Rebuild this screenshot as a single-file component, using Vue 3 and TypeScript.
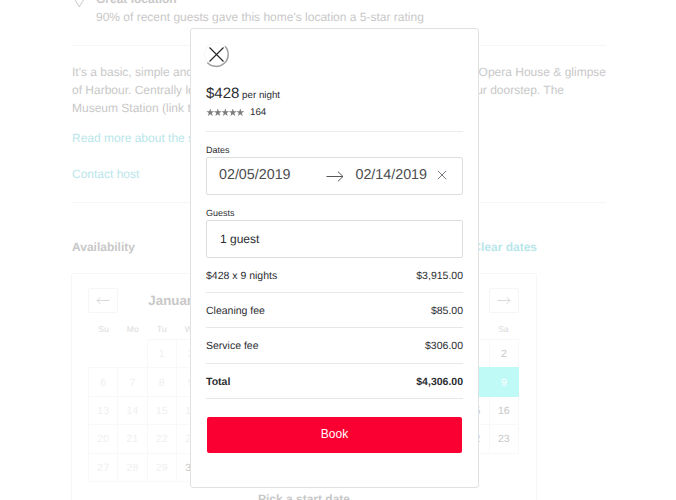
<script setup lang="ts">
interface SummaryLine { start: string; end: string; width: number }
interface Day { label: string; state: string }

const summary: SummaryLine[] = [
  { start: "It's a basic, simple and", end: 'Opera House & glimpse', width: 534 },
  { start: 'of Harbour. Centrally located', end: 'your doorstep. The', width: 492 },
  { start: 'Museum Station (link train)', end: '', width: 534 },
]

const weekdays = ['Su', 'Mo', 'Tu', 'We', 'Th', 'Fr', 'Sa']

function buildDays(offset: number, count: number, stateOf: (d: number) => string): Day[] {
  const total = Math.ceil((offset + count) / 7) * 7
  return Array.from({ length: total }, (_, i) => {
    const d = i - offset + 1
    return d < 1 || d > count ? { label: '', state: 'empty' } : { label: String(d), state: stateOf(d) }
  })
}

const months = [
  { name: 'January 2019', days: buildDays(2, 31, (d) => (d < 30 ? 'past' : 'open')) },
  { name: 'February 2019', days: buildDays(5, 28, (d) => (d >= 5 && d <= 14 ? 'selected' : 'open')) },
]

const fees = [
  { label: '$428 x 9 nights', amount: '$3,915.00' },
  { label: 'Cleaning fee', amount: '$85.00' },
  { label: 'Service fee', amount: '$306.00' },
  { label: 'Total', amount: '$4,306.00', total: true },
]
</script>

<template>
  <div class="page">
    <main class="listing">
      <section class="highlight">
        <svg class="pin" width="14" height="20" viewBox="0 0 14 20">
          <path d="M7.3 16.8C5.3 13 2 10 2 6a5 5 0 0 1 10.6 0c0 4-3.3 7-5.3 10.8Z" />
        </svg>
        <div>
          <div class="strong">Great location</div>
          <div>90% of recent guests gave this home's location a 5-star rating</div>
        </div>
      </section>
      <section class="about">
        <div v-for="line in summary" :key="line.start" class="line" :style="{ width: line.width + 'px' }">
          <span>{{ line.start }}</span><span>{{ line.end }}</span>
        </div>
        <a class="link more">Read more about the space</a>
        <a class="link">Contact host</a>
      </section>
      <section class="availability">
        <div class="heading"><span>Availability</span><a class="link">Clear dates</a></div>
        <div class="calendar">
          <div class="months">
            <div v-for="(month, m) in months" :key="month.name" class="month">
              <div class="month-head" :class="{ second: m === 1 }">
                <button class="nav">
                  <svg width="14" height="9" viewBox="0 0 14 9">
                    <path v-if="m === 0" d="M13.5 4.5H1M4.5 1 1 4.5 4.5 8" />
                    <path v-else d="M.5 4.5H13M9.5 1 13 4.5 9.5 8" />
                  </svg>
                </button>
                <span class="month-name">{{ month.name }}</span>
                <span class="spacer"></span>
              </div>
              <div class="weekdays"><span v-for="w in weekdays" :key="w">{{ w }}</span></div>
              <div class="days">
                <span v-for="(day, i) in month.days" :key="i" class="day" :class="day.state">{{ day.label }}</span>
              </div>
            </div>
          </div>
          <div class="hint">Pick a start date</div>
        </div>
      </section>
    </main>

    <div class="dialog" role="dialog">
      <button class="close">
        <svg width="26" height="26" viewBox="0 0 26 26">
          <circle class="halo" cx="12.5" cy="12.5" r="12" />
          <path class="arc" d="M21 4.200A11.900 11.900 0 0 1 3.300 20.500" />
          <path class="cross" d="M5.500 5.500 19.500 19.500M19.500 5.500 5.500 19.500" />
        </svg>
      </button>
      <div class="price"><span class="amount">$428</span> per night</div>
      <div class="rating">
        <svg width="38" height="9" viewBox="0 0 38 9">
          <path
            v-for="n in 5" :key="n" :transform="`translate(${(n - 1) * 7.5 + 0.3} 0)`"
            d="M4 .4 4.95 3.3H7.9L5.5 5.1 6.45 8 4 6.2 1.55 8 2.5 5.1.1 3.3H3.05Z"
          />
        </svg>
        <span>164</span>
      </div>
      <div class="label dates-label">Dates</div>
      <div class="field dates">
        <span class="date">02/05/2019</span>
        <svg class="arrow" width="18" height="11" viewBox="0 0 18 11">
          <path d="M.5 5.500H17M12 .7 17 5.500 12 10.300" />
        </svg>
        <span class="date">02/14/2019</span>
        <svg class="clear" width="10" height="10" viewBox="0 0 10 10"><path d="m.8.8 8.400 8.400M9.200.8.8 9.200" /></svg>
      </div>
      <div class="label guests-label">Guests</div>
      <div class="field guests">1 guest</div>
      <div class="fees">
        <div v-for="fee in fees" :key="fee.label" class="fee" :class="{ total: fee.total }">
          <span>{{ fee.label }}</span><span>{{ fee.amount }}</span>
        </div>
      </div>
      <button class="book">Book</button>
    </div>
  </div>
</template>

<style>
body { overflow: hidden; background: #fff; }
</style>

<style scoped>
* { box-sizing: border-box; }
button { font-family: inherit; padding: 0; border: 0; background: none; }
svg { display: block; fill: none; }
.page {
  position: relative;
  height: 500px;
  overflow: hidden;
  font-family: "Liberation Sans", Arial, sans-serif;
  font-size: 12px;
  line-height: 18px;
  color: #c8c8c8;
  text-rendering: geometricPrecision;
}
.listing { width: 534px; margin: -10px 0 0 72px; }
.highlight { display: flex; gap: 10px; height: 56px; border-bottom: 1px solid #f6f6f6; }
.pin { stroke: #c8c8c8; width: 14px; flex: none; }
.strong { font-weight: bold; }
.about { height: 157px; padding-top: 17px; border-bottom: 1px solid #f6f6f6; }
.line { display: flex; justify-content: space-between; height: 18px; white-space: nowrap; }
.link { display: block; color: #b9e6eb; }
.more { margin: 12px 0 18px; }
.availability { width: 465px; padding-top: 35px; }
.heading { display: flex; justify-content: space-between; font-weight: bold; }
.calendar { width: 466px; height: 300px; margin: 17px 0 0 -1px; padding: 14px 16px; border: 1px solid #f7f7f7; border-radius: 2px; }
.months { display: flex; justify-content: space-between; width: 430px; }
.month { width: 205px; }
.month-head { display: flex; align-items: center; justify-content: space-between; height: 25px; }
.month-head.second { flex-direction: row-reverse; margin-right: -1px; }
.nav { display: grid; place-items: center; width: 30px; height: 25px; border: 1px solid #f6f6f6; border-radius: 2px; }
.nav path { stroke: #d9d9d9; }
.spacer { width: 30px; }
.month-name { font-size: 13.3px; font-weight: bold; white-space: nowrap; }
.weekdays { display: grid; grid-template-columns: repeat(7, 1fr); height: 26px; padding: 7px 0 0 1px; text-align: center; font-size: 8.5px; color: #dadada; }
.days { display: grid; grid-template-columns: repeat(7, 1fr); grid-auto-rows: 28.4px; }
.day { display: grid; place-items: center; padding-top: 1px; font-size: 10.5px; border: 1px solid #f8f8f8; margin: 0 -1px -1px 0; }
.empty { border-color: transparent; }
.past { color: #efefef; }
.selected { position: relative; color: #fff; background: #bffaf6; border-color: #bffaf6; }
.hint { margin-top: 9px; text-align: center; font-weight: bold; }

.dialog {
  position: absolute;
  left: 190px;
  top: 28px;
  width: 289px;
  height: 460px;
  padding: 13px 15px 0;
  border: 1px solid #e0e1e1;
  border-radius: 3px;
  background: #fff;
  color: #2b2d31;
}
.close { display: block; width: 26px; height: 26px; margin-left: -2px; }
.halo { stroke: #f6f6f6; }
.arc { stroke: #a0a0a0; stroke-width: 1.5; }
.cross { stroke: #222; stroke-width: 1.1; }
.price { height: 20px; margin-top: 16px; line-height: 20px; font-size: 9.75px; }
.amount { font-size: 15px; }
.rating { display: flex; align-items: center; gap: 6px; height: 28px; padding-bottom: 10px; border-bottom: 1px solid #ebebeb; font-size: 9.75px; }
.rating path { fill: #7d7d7d; }
.label { font-size: 9px; line-height: 12px; }
.dates-label { margin: 12px 0 0; }
.guests-label { margin-top: 12px; }
.field { display: flex; align-items: center; height: 38px; border: 1px solid #dcdddd; border-radius: 2px; }
.dates { margin-top: 1px; padding: 0 15px 2px 12px; }
.date { font-size: 14.3px; color: #4b4c4e; }
.arrow { margin: 2px 11px 0 auto; stroke: #555; }
.clear { margin: 0 0 0 10px; stroke: #777c82; }
.guests { margin-top: 1px; padding-left: 13px; }
.fee { display: flex; justify-content: space-between; height: 35.2px; line-height: 36px; font-size: 10.5px; border-bottom: 1px solid #e6e7e7; }
.total { font-weight: bold; }
.book { display: block; width: 255px; height: 36px; margin: 18.2px 0 0 1px; padding-bottom: 1px; border-radius: 2px; background: #fa0032; color: #fff; font-size: 12px; }
</style>
